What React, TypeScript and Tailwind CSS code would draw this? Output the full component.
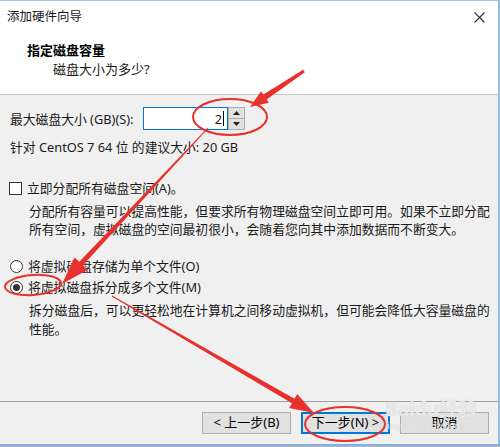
import React from 'react';

type Pt = [number, number];

// tapered arrow: thin at the tail, wide head at the tip
const arrowPoints = (from: Pt, tip: Pt, headLen: number, headHalf: number, tail: number, neck: number) => {
  const dx = tip[0] - from[0];
  const dy = tip[1] - from[1];
  const len = Math.hypot(dx, dy);
  const ux = dx / len;
  const uy = dy / len;
  const px = -uy;
  const py = ux;
  const bx = tip[0] - ux * headLen;
  const by = tip[1] - uy * headLen;
  const pts: Pt[] = [
    [from[0] + px * tail, from[1] + py * tail],
    [bx + px * neck, by + py * neck],
    [bx + px * headHalf, by + py * headHalf],
    tip,
    [bx - px * headHalf, by - py * headHalf],
    [bx - px * neck, by - py * neck],
    [from[0] - px * tail, from[1] - py * tail],
  ];
  return pts.map((p) => p.join(',')).join(' ');
};

const Annotations = () => (
  <svg className="absolute inset-0 pointer-events-none" width="500" height="447" viewBox="0 0 500 447">
    <g fill="none" stroke="#e8312c" strokeWidth="2">
      <ellipse cx="230" cy="117" rx="37" ry="18" />
      <ellipse cx="33" cy="285" rx="28" ry="10" transform="rotate(-4 33 285)" />
      <ellipse cx="345" cy="424" rx="40" ry="17" />
    </g>
    <g fill="#e8312c">
      <polygon points={arrowPoints([304, 71], [250, 107], 18, 7, 1.5, 3)} />
      <polygon points={arrowPoints([208, 128], [62, 284], 28, 9, 0.5, 2.5)} />
      <polygon points={arrowPoints([112, 296], [314, 413], 24, 8, 0.5, 2.5)} />
    </g>
  </svg>
);

const Button = ({ label, primary }: { label: string; primary?: boolean }) => (
  <div
    className={`w-[89px] h-[22px] flex items-center justify-center bg-[#e1e1e1] text-[13px] text-black border ${
      primary ? 'border-[#0078d7] shadow-[inset_0_0_0_1px_#0078d7]' : 'border-[#adadad]'
    }`}
  >
    {label}
  </div>
);

export default function App() {
  return (
    <div
      className="relative w-[500px] h-[447px] overflow-hidden bg-[#f0f0f0] flex flex-col text-[#1a1a1a]"
      style={{ fontFamily: '"Noto Sans", "Noto Sans CJK SC", sans-serif' }}
    >
      {/* header */}
      <div className="h-[95px] bg-white border-t border-[#9fc3e6] border-b border-b-[#c8c8c8] border-r-2 border-r-[#8fbbe6] flex flex-col">
        <div className="flex items-center justify-between pt-[7px] pl-[7px] pr-[13px] h-[25px]">
          <span className="text-[12.5px] leading-[18px]">添加硬件向导</span>
          <svg width="11" height="11" viewBox="0 0 11 11" className="mt-[1px]">
            <path d="M0.5 0.5 L10.5 10.5 M10.5 0.5 L0.5 10.5" stroke="#333" strokeWidth="1.1" />
          </svg>
        </div>
        <div className="mt-[15px] pl-[27px] text-[13px] leading-[18px] font-bold text-black">指定磁盘容量</div>
        <div className="mt-[1px] pl-[53px] text-[13px] leading-[18px]">磁盘大小为多少?</div>
      </div>

      {/* body */}
      <div className="flex-1 flex flex-col text-[12.8px] border-r-2 border-r-[#8fbbe6]">
        <div className="flex items-center pt-[12px] pl-[10px]">
          <span className="w-[133px] leading-[18px]">最大磁盘大小 (GB)(S):</span>
          <div className="w-[85px] h-[23px] bg-white border border-[#0078d7] flex items-center justify-end pr-[3px]">
            <span className="leading-[18px]">2</span>
            <span className="w-px h-[15px] bg-black ml-[1px]" />
          </div>
          <div className="w-[17px] h-[23px] flex flex-col border border-[#adadad] bg-[#e1e1e1]">
            <div className="flex-1 flex items-center justify-center border-b border-[#adadad]">
              <svg width="7" height="4" viewBox="0 0 7 4"><path d="M0 4 L3.5 0 L7 4 Z" fill="#222" /></svg>
            </div>
            <div className="flex-1 flex items-center justify-center">
              <svg width="7" height="4" viewBox="0 0 7 4"><path d="M0 0 L3.5 4 L7 0 Z" fill="#222" /></svg>
            </div>
          </div>
        </div>
        <div className="mt-[8px] pl-[10px] leading-[18px]">针对 CentOS 7 64 位 的建议大小: 20 GB</div>

        <div className="mt-[23px] pl-[9px] flex items-center gap-[5px] leading-[18px]">
          <div className="w-[13px] h-[13px] bg-white border border-[#333]" />
          <span>立即分配所有磁盘空间(A)。</span>
        </div>
        <div className="mt-[5px] pl-[29px] leading-[18px] whitespace-nowrap">
          <div>分配所有容量可以提高性能，但要求所有物理磁盘空间立即可用。如果不立即分配</div>
          <div>所有空间，虚拟磁盘的空间最初很小，会随着您向其中添加数据而不断变大。</div>
        </div>

        <div className="mt-[19px] pl-[10px] flex items-center gap-[5px] leading-[18px]">
          <div className="w-[13px] h-[13px] rounded-full bg-white border border-[#333]" />
          <span>将虚拟磁盘存储为单个文件(O)</span>
        </div>
        <div className="mt-[3px] pl-[10px] flex items-center gap-[5px] leading-[18px]">
          <div className="w-[13px] h-[13px] rounded-full bg-white border border-[#333] flex items-center justify-center">
            <div className="w-[7px] h-[7px] rounded-full bg-[#333]" />
          </div>
          <span>将虚拟磁盘拆分成多个文件(M)</span>
        </div>
        <div className="mt-[5px] pl-[29px] leading-[19px] whitespace-nowrap">
          <div>拆分磁盘后，可以更轻松地在计算机之间移动虚拟机，但可能会降低大容量磁盘的</div>
          <div>性能。</div>
        </div>
      </div>

      {/* footer */}
      <div className="h-[43px] border-t border-[#a0a0a0] border-r-2 border-r-[#8fbbe6] flex justify-end gap-[10px] pt-[10px] pr-[9px]">
        <Button label="< 上一步(B)" />
        <Button label="下一步(N) >" primary />
        <Button label="取消" />
      </div>
      <div className="h-[2px] bg-[#7fb3e6]" />
      <div className="h-[1px] bg-[#b8b8b8]" />

      {/* watermark */}
      <div className="absolute left-[385px] top-[399px] flex flex-col items-start pointer-events-none leading-none">
        <span className="text-[19px] h-[21px] leading-[21px] font-bold text-white/60 [text-shadow:0_0_1px_#c4c4c4]">Baidu经验</span>
        <span className="text-[9px] h-[11px] leading-[11px] text-white/60 [text-shadow:0_0_1px_#c4c4c4]">jingyan.baidu.com</span>
      </div>

      <Annotations />
    </div>
  );
}
